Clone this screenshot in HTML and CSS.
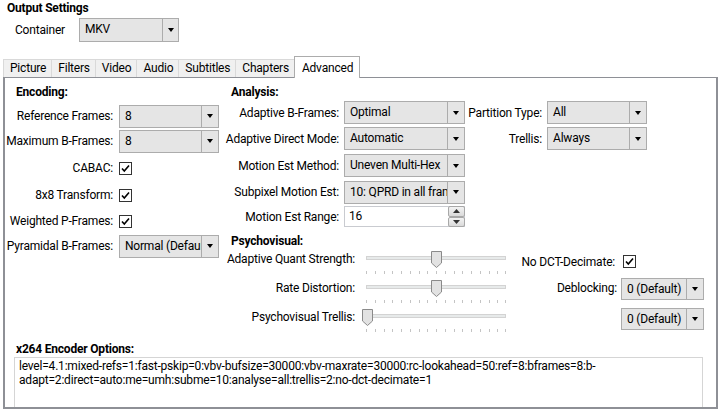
FILE: index.html
```html
<!DOCTYPE html>
<html>
<head>
<meta charset="utf-8">
<link rel="stylesheet" href="styles.css">
</head>
<body>
<div class="title">Output Settings</div>
<div class="container-row">
  <span class="cont-lbl">Container</span>
  <div class="combo combo-cont"><span class="val">MKV</span><span class="arr"></span></div>
</div>
<div class="tabs">
  <div class="tab">Picture</div>
  <div class="tab">Filters</div>
  <div class="tab">Video</div>
  <div class="tab">Audio</div>
  <div class="tab">Subtitles</div>
  <div class="tab">Chapters</div>
  <div class="tab active">Advanced</div>
</div>
<div class="panel">
  <div class="top">
    <div class="enc">
      <div class="head enc-head">Encoding:</div>
      <div class="enc-grid">
        <span class="lbl">Reference Frames:</span>
        <div class="combo"><span class="val">8</span><span class="arr"></span></div>
        <span class="lbl">Maximum B-Frames:</span>
        <div class="combo"><span class="val">8</span><span class="arr"></span></div>
        <span class="lbl">CABAC:</span>
        <span class="check"><svg width="11" height="11" viewBox="0 0 11 11"><path d="M2 5.5 L4.3 8 L9 2.5" fill="none" stroke="#000" stroke-width="1.6"/></svg></span>
        <span class="lbl">8x8 Transform:</span>
        <span class="check"><svg width="11" height="11" viewBox="0 0 11 11"><path d="M2 5.5 L4.3 8 L9 2.5" fill="none" stroke="#000" stroke-width="1.6"/></svg></span>
        <span class="lbl">Weighted P-Frames:</span>
        <span class="check"><svg width="11" height="11" viewBox="0 0 11 11"><path d="M2 5.5 L4.3 8 L9 2.5" fill="none" stroke="#000" stroke-width="1.6"/></svg></span>
        <span class="lbl">Pyramidal B-Frames:</span>
        <div class="combo"><span class="val">Normal (Default)</span><span class="arr"></span></div>
      </div>
    </div>
    <div class="ana">
      <div class="head ana-head">Analysis:</div>
      <div class="ana-grid">
        <span class="lbl">Adaptive B-Frames:</span>
        <div class="combo"><span class="val">Optimal</span><span class="arr"></span></div>
        <span class="lbl">Partition Type:</span>
        <div class="combo"><span class="val">All</span><span class="arr"></span></div>

        <span class="lbl">Adaptive Direct Mode:</span>
        <div class="combo"><span class="val">Automatic</span><span class="arr"></span></div>
        <span class="lbl">Trellis:</span>
        <div class="combo"><span class="val">Always</span><span class="arr"></span></div>

        <span class="lbl">Motion Est Method:</span>
        <div class="combo"><span class="val">Uneven Multi-Hex</span><span class="arr"></span></div>
        <span></span><span></span>

        <span class="lbl">Subpixel Motion Est:</span>
        <div class="combo"><span class="val">10: QPRD in all frames</span><span class="arr"></span></div>
        <span></span><span></span>

        <span class="lbl">Motion Est Range:</span>
        <div class="num">
          <span class="val">16</span>
          <span class="spin">
            <span class="btn"><svg width="7" height="4" viewBox="0 0 7 4"><path d="M0 4 L3.5 0 L7 4 Z" fill="#333"/></svg></span>
            <span class="btn"><svg width="7" height="4" viewBox="0 0 7 4"><path d="M0 0 L3.5 4 L7 0 Z" fill="#333"/></svg></span>
          </span>
        </div>
        <span></span><span></span>
      </div>

      <div class="head psy-head">Psychovisual:</div>
      <div class="psy-grid">
        <span class="plbl">Adaptive Quant Strength:</span>
        <div class="slider">
          <div class="track"></div>
          <svg class="thumb" style="left: 64.5px" width="11" height="17" viewBox="0 0 11 17"><path d="M0.5 0.5 H10.5 V12 L5.5 16.5 L0.5 12 Z" fill="#e2e2e2" stroke="#8a8a8a"/></svg>
          <svg class="ticks" width="140" height="3" viewBox="0 0 140 3"><path d="M0.5 0V3M9.5 0V3M18.5 0V3M26.5 0V3M35.5 0V3M44.5 0V3M53.5 0V3M61.5 0V3M70.5 0V3M79.5 0V3M88.5 0V3M96.5 0V3M105.5 0V3M114.5 0V3M123.5 0V3M131.5 0V3M139.5 0V3" stroke="#c4c4c4"/></svg>
        </div>
        <span class="rlbl rlbl-1">No DCT-Decimate:</span>
        <span class="check check-1"><svg width="11" height="11" viewBox="0 0 11 11"><path d="M2 5.5 L4.3 8 L9 2.5" fill="none" stroke="#000" stroke-width="1.6"/></svg></span>

        <span class="plbl">Rate Distortion:</span>
        <div class="slider">
          <div class="track"></div>
          <svg class="thumb" style="left: 64.5px" width="11" height="17" viewBox="0 0 11 17"><path d="M0.5 0.5 H10.5 V12 L5.5 16.5 L0.5 12 Z" fill="#e2e2e2" stroke="#8a8a8a"/></svg>
          <svg class="ticks" width="140" height="3" viewBox="0 0 140 3"><path d="M0.5 0V3M9.5 0V3M18.5 0V3M26.5 0V3M35.5 0V3M44.5 0V3M53.5 0V3M61.5 0V3M70.5 0V3M79.5 0V3M88.5 0V3M96.5 0V3M105.5 0V3M114.5 0V3M123.5 0V3M131.5 0V3M139.5 0V3" stroke="#c4c4c4"/></svg>
        </div>
        <span class="rlbl rlbl-2">Deblocking:</span>
        <div class="combo combo-sm combo-2"><span class="val">0 (Default)</span><span class="arr"></span></div>

        <span class="plbl">Psychovisual Trellis:</span>
        <div class="slider">
          <div class="track"></div>
          <svg class="thumb" style="left: -4.5px" width="11" height="17" viewBox="0 0 11 17"><path d="M0.5 0.5 H10.5 V12 L5.5 16.5 L0.5 12 Z" fill="#e2e2e2" stroke="#8a8a8a"/></svg>
          <svg class="ticks" width="140" height="3" viewBox="0 0 140 3"><path d="M0.5 0V3M9.5 0V3M18.5 0V3M26.5 0V3M35.5 0V3M44.5 0V3M53.5 0V3M61.5 0V3M70.5 0V3M79.5 0V3M88.5 0V3M96.5 0V3M105.5 0V3M114.5 0V3M123.5 0V3M131.5 0V3M139.5 0V3" stroke="#c4c4c4"/></svg>
        </div>
        <span></span>
        <div class="combo combo-sm combo-3"><span class="val">0 (Default)</span><span class="arr"></span></div>
      </div>
    </div>
  </div>
  <div class="opts">
    <div class="head opts-head">x264 Encoder Options:</div>
    <div class="textarea">level=4.1:mixed-refs=1:fast-pskip=0:vbv-bufsize=30000:vbv-maxrate=30000:rc-lookahead=50:ref=8:bframes=8:b-adapt=2:direct=auto:me=umh:subme=10:analyse=all:trellis=2:no-dct-decimate=1</div>
  </div>
</div>
</body>
</html>
```

FILE: styles.css
```css
html, body {
  margin: 0;
  padding: 0;
  background: #ffffff;
}
body {
  font-family: "Segoe UI", Roboto, "Noto Sans", sans-serif;
  font-size: 12px;
  letter-spacing: -0.2px;
  color: #000;
  width: 721px;
  height: 414px;
  overflow: hidden;
}
.title {
  font-weight: bold;
  line-height: 16px;
  padding-left: 7px;
}
.container-row {
  display: flex;
  align-items: center;
  height: 24px;
  margin: 2px 0 0 15px;
}
.cont-lbl {
  width: 64px;
}
.combo {
  display: flex;
  height: 23px;
  box-sizing: border-box;
  border: 1px solid #acacac;
  background: #e5e5e5;
  min-width: 0;
}
.combo .val {
  flex: 1;
  min-width: 0;
  padding-left: 5px;
  line-height: 20px;
  white-space: nowrap;
  overflow: hidden;
}
.combo .arr {
  flex: none;
  width: 16px;
  border-left: 1px solid #acacac;
  display: flex;
  align-items: center;
  justify-content: center;
}
.combo .arr::after {
  content: "";
  width: 0;
  height: 0;
  border-left: 3.5px solid transparent;
  border-right: 3.5px solid transparent;
  border-top: 4px solid #000;
}
.combo-cont {
  width: 100px;
  height: 24px;
}
.combo-cont .arr {
  width: 15px;
}
.tabs {
  display: flex;
  align-items: flex-end;
  height: 21px;
  margin: 14px 0 0 3px;
  position: relative;
  z-index: 2;
}
.tab {
  height: 18px;
  box-sizing: border-box;
  line-height: 17px;
  padding: 0 5px 0 6px;
  background: #f0f0f0;
  border: 1px solid #d9d9d9;
  border-bottom: none;
  margin-right: -1px;
}
.tab.active {
  height: 22px;
  line-height: 22px;
  padding: 0 6px 0 7px;
  background: #ffffff;
  border-color: #acacac;
  margin-bottom: -1px;
}
.panel {
  position: relative;
  z-index: 1;
  margin-left: 3px;
  width: 715px;
  height: 332px;
  box-sizing: border-box;
  border: 2px solid #8e9096;
  border-top-width: 1px;
  padding-top: 6px;
  background: #fff;
}
.head {
  font-weight: bold;
  line-height: 16px;
  white-space: nowrap;
}
.top {
  display: flex;
}
.enc {
  width: 214px;
  flex: none;
}
.enc-head {
  margin-left: 11px;
}
.enc-grid {
  display: grid;
  grid-template-columns: 108px 100px;
  column-gap: 6px;
  grid-template-rows: 24px 26px 28px 26px 26px 24px;
  align-items: center;
  margin-top: 4px;
}
.lbl {
  text-align: right;
  white-space: nowrap;
  line-height: 16px;
}
.check {
  width: 13px;
  height: 13px;
  box-sizing: border-box;
  border: 1px solid #333;
  background: #fff;
  display: flex;
  align-items: center;
  justify-content: center;
}
.check svg {
  display: block;
}
.ana {
  margin-left: 6px;
  flex: none;
  width: 486px;
}
.ana-head {
  margin-left: 6px;
}
.ana-grid {
  display: grid;
  grid-template-columns: 119px 121px 82px 100px;
  grid-template-rows: 25px 27px 27px 26px 23px;
  align-items: center;
}
.ana-grid .lbl {
  padding-right: 5px;
}
.num {
  display: flex;
  height: 21px;
  box-sizing: border-box;
  border: 1px solid #c9cbd0;
  background: #fff;
}
.num .val {
  flex: 1;
  padding-left: 4px;
  line-height: 18px;
}
.num .spin {
  width: 16px;
  display: flex;
  flex-direction: column;
}
.num .btn {
  flex: 1;
  display: flex;
  align-items: center;
  justify-content: center;
  background: linear-gradient(#f3f3f3, #dadada);
  border: 1px solid #a8a8a8;
  border-radius: 2px;
  margin: -1px -1px 0 0;
}
.num .btn + .btn {
  margin-top: 0;
  margin-bottom: -1px;
}
.num .btn svg {
  display: block;
}
.psy-head {
  margin: 5px 0 0 6px;
}
.psy-grid {
  display: grid;
  grid-template-columns: 141px 140px 115px 83px;
  grid-template-rows: 29px 29px 29px;
  align-items: start;
  margin-top: 2px;
}
.plbl {
  text-align: right;
  white-space: nowrap;
  line-height: 13px;
  padding: 2px 11px 0 0;
}
.slider {
  position: relative;
  width: 140px;
  height: 24px;
}
.slider .track {
  margin-top: 5px;
  height: 4px;
  box-sizing: border-box;
  border: 1px solid #d3d3d3;
  background: #e7eaea;
}
.slider .thumb {
  position: absolute;
  top: 0;
  display: block;
}
.slider .ticks {
  display: block;
  margin-top: 11px;
}
.rlbl {
  text-align: right;
  white-space: nowrap;
  line-height: 13px;
  padding-right: 4px;
}
.rlbl-1 {
  margin-top: 5px;
  padding-right: 6px;
}
.check-1 {
  margin-top: 4px;
  margin-left: 2px;
}
.rlbl-2 {
  margin-top: 2px;
}
.combo-sm {
  height: 22px;
}
.combo-2 {
  margin-top: -2px;
}
.combo-3 {
  margin-top: -1px;
}
.opts-head {
  margin: 3px 0 0 11px;
}
.textarea {
  margin: 0 13px 0 9px;
  height: 50px;
  box-sizing: border-box;
  border: 1px solid #d5d5d5;
  border-bottom: none;
  padding: 1px 4px 0 4px;
  line-height: 14px;
  overflow: hidden;
}
```
